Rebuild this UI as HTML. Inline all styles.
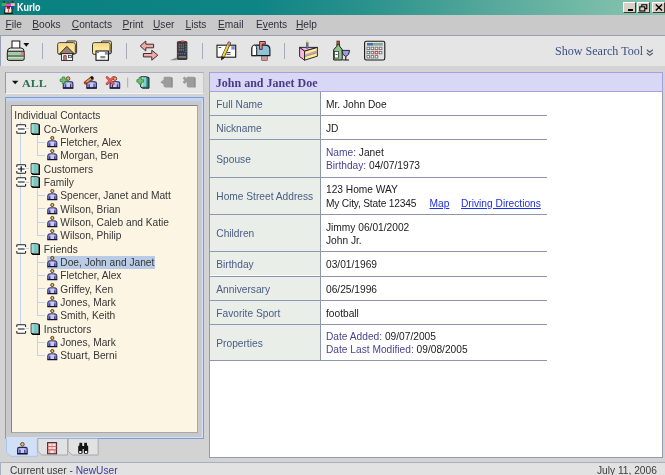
<!DOCTYPE html>
<html><head><meta charset="utf-8"><title>Kurlo</title>
<style>
html,body{margin:0;padding:0;}
body{width:665px;height:475px;overflow:hidden;background:#d3d3d3;font-family:"Liberation Sans",sans-serif;font-size:10.2px;color:#222;position:relative;}
.abs{position:absolute;}
svg{overflow:visible;}
#title{left:0;top:0;width:665px;height:15px;background:linear-gradient(90deg,#0a8181 0%,#0e8484 38%,#2a928c 55%,#58aa9c 75%,#7cbeaa 92%,#86c4b0 100%);}
#title .t{left:17.3px;top:0.8px;color:#fff;font-weight:bold;font-size:10px;line-height:13px;transform:scaleX(0.9);transform-origin:0 0;white-space:nowrap;}
.wb{position:absolute;top:2px;height:10.5px;background:#d8d0c2;border-top:1px solid #fff;border-left:1px solid #fff;border-right:1px solid #40382c;border-bottom:1px solid #40382c;box-sizing:border-box;}
#menu{left:0;top:15px;width:665px;height:20px;background:#c9c9c9;}
#menu span{position:absolute;top:3.2px;font-size:10.2px;line-height:13px;color:#30303c;}
#menu u{text-decoration:underline;text-underline-offset:1px;}
#tb{left:0;top:34.7px;width:665px;height:31.8px;background:#e5e5e5;border-top:1px solid #98a0b4;border-left:1px solid #98a0b4;box-sizing:border-box;}
.sep{position:absolute;top:43px;width:1px;height:15.5px;background:#a4acbc;}
#ltb{left:5px;top:71.5px;width:199px;height:22px;background:#e5e5e5;border:1px solid #c4c8d0;border-left-color:#8c9cb8;border-top-color:#a8b0c4;border-bottom-color:#f4f4f4;box-sizing:border-box;}
#tree-o{left:5px;top:97px;width:199px;height:342.3px;background:#c9c9c9;border:1px solid #7c9cd8;box-sizing:border-box;box-shadow:inset 0 3px 0 #c2d4f8, inset -1.2px -1px 0 #d0e0fc;}
#tree{left:11px;top:105px;width:186.6px;height:327.6px;background:#fdf5e3;border:1px solid #a4a8b0;border-top-color:#7c8498;border-left-color:#7c8498;box-sizing:border-box;}
.row{position:absolute;height:13.33px;line-height:13.33px;white-space:nowrap;font-size:10.2px;color:#363636;}
#rp{left:209px;top:71.5px;width:454px;height:386px;background:#fff;border:1px solid #909cb4;box-sizing:border-box;}
#rph{left:209px;top:71.5px;width:454px;height:20.5px;background:#d8d8f6;border:1px solid #a8a0d8;box-sizing:border-box;}
#rph span{position:absolute;left:5.8px;top:3px;font-family:"Liberation Serif",serif;font-weight:bold;font-size:12px;line-height:14px;color:#483c88;white-space:nowrap;}
.lab{color:#4a5c84;white-space:nowrap;line-height:13px;font-size:10.2px;}
.val{color:#202020;white-space:nowrap;line-height:13px;font-size:10.2px;}
.k{color:#4a4690;}
a{color:#2030e0;text-decoration:underline;}
#status{left:0;top:462px;width:665px;height:13px;background:#e2e2e2;border-top:1px solid #a8b0c0;border-left:1px solid #a8b0c0;box-sizing:border-box;font-size:10.2px;line-height:13px;color:#3a3a3a;}
#wrap{position:absolute;left:0;top:0;width:665px;height:475px;will-change:transform;}
</style></head><body><div id="wrap">
<div id="title" class="abs"><span class="abs t">Kurlo</span>
<div class="wb" style="left:623px;width:13px"><div class="abs" style="left:3.5px;top:6px;width:5px;height:1.6px;background:#000"></div></div>
<div class="wb" style="left:636.5px;width:13px"><svg class="abs" style="left:1.5px;top:0.5px" width="9" height="8" viewBox="0 0 9 8"><path d="M2.8 2.4 V0.8 H7.8 V4.6 H6" fill="none" stroke="#000" stroke-width="1.1"/><rect x="0.8" y="2.8" width="5" height="4.2" fill="none" stroke="#000" stroke-width="1.1"/></svg></div>
<div class="wb" style="left:652px;width:13px"><svg class="abs" style="left:2.2px;top:1px" width="8" height="7" viewBox="0 0 8 7"><path d="M0.8 0.6 L7 6.4 M7 0.6 L0.8 6.4" stroke="#000" stroke-width="1.4"/></svg></div>
<svg class="abs" style="left:0;top:0" width="18" height="15" viewBox="0 0 18 15">
<rect x="4.7" y="6.6" width="7.3" height="6.6" fill="#fff6d4" stroke="#1c1008" stroke-width="1"/>
<rect x="4.2" y="12.8" width="8.3" height="1" fill="#180c04"/>
<circle cx="4" cy="1.9" r="1.1" fill="#4a3420"/><rect x="1.7" y="3" width="4.4" height="3.4" fill="#44b432"/><rect x="2.6" y="6.2" width="3" height="3" fill="#2c5cc0"/>
<circle cx="12.6" cy="1.9" r="1.1" fill="#4a3420"/><rect x="10.8" y="3.2" width="4" height="2.8" fill="#f4b8b8"/><rect x="11" y="6" width="3" height="3.2" fill="#204c9c"/>
<circle cx="8.3" cy="2.6" r="1.1" fill="#6a4428"/><rect x="6" y="3.8" width="4.8" height="2.6" fill="#e444e0"/><rect x="6.8" y="6.2" width="3.2" height="2.6" fill="#8c1030"/>
<rect x="7.9" y="8.6" width="1" height="3.4" fill="#f03468"/>
</svg>
</div>
<div id="menu" class="abs">
<span style="left:5.4px"><u>F</u>ile</span>
<span style="left:32.3px"><u>B</u>ooks</span>
<span style="left:71.8px"><u>C</u>ontacts</span>
<span style="left:122.5px"><u>P</u>rint</span>
<span style="left:153px"><u>U</u>ser</span>
<span style="left:185.5px"><u>L</u>ists</span>
<span style="left:218px"><u>E</u>mail</span>
<span style="left:256px">E<u>v</u>ents</span>
<span style="left:296px"><u>H</u>elp</span>
</div>
<div id="tb" class="abs"></div>
<div class="sep" style="left:42px"></div>
<div class="sep" style="left:126px"></div>
<div class="sep" style="left:202px"></div>
<div class="sep" style="left:284px"></div>
<svg class="abs" style="left:0;top:0.4px;pointer-events:none" width="665" height="100" viewBox="0 0 665 100">
<!-- printer -->
<rect x="12" y="41" width="7.8" height="8" fill="#fff" stroke="#181818" stroke-width="1"/>
<path d="M7.3 52 Q7.3 48 10.5 48 H21 Q24.2 48 24.2 52 Z" fill="#ececec" stroke="#181818" stroke-width="1"/>
<rect x="7.3" y="51.2" width="16.9" height="9.2" rx="1.6" fill="#a4cca4" stroke="#181818" stroke-width="1"/>
<rect x="8" y="55.6" width="15.6" height="1.1" fill="#181818"/>
<rect x="8" y="56.7" width="15.6" height="0.8" fill="#f0f0f0"/>
<rect x="20.9" y="52" width="2.3" height="3.2" fill="#e47c7c"/>
<path d="M23.4 43.1 H29.2 L26.3 46.8 Z" fill="#101010"/>
<g transform="translate(0,0)">
<path d="M66.6 50 V42.3 Q66.6 41 67.9 41 H75.2 Q76.6 41 76.6 42.4 V52.6 Q76.6 53.6 75.6 53.6 H74" fill="#fdeaa8" stroke="#202020" stroke-width="0.9"/>
<rect x="57.7" y="42.7" width="17.6" height="11.7" rx="1.8" fill="#fce49a" stroke="#202020" stroke-width="0.9"/>
<rect x="58.6" y="43.6" width="15.8" height="3" fill="#fbdc88"/>
</g>
<path d="M66.8 46.4 L74.2 53.7 H59.6 Z" fill="#9c7e70" stroke="#1c1c1c" stroke-width="0.9"/>
<rect x="61.6" y="53.7" width="11" height="6.7" fill="#fff" stroke="#1c1c1c" stroke-width="0.9"/>
<rect x="63.8" y="55.7" width="2.4" height="4.6" fill="#d48484" stroke="#402020" stroke-width="0.7"/>
<rect x="68.6" y="55.5" width="3" height="2.2" fill="#e4e4ee" stroke="#303030" stroke-width="0.7"/>
<g transform="translate(34.8,0)">
<path d="M66.6 50 V42.3 Q66.6 41 67.9 41 H75.2 Q76.6 41 76.6 42.4 V52.6 Q76.6 53.6 75.6 53.6 H74" fill="#fdeaa8" stroke="#202020" stroke-width="0.9"/>
<rect x="57.7" y="42.7" width="17.6" height="11.7" rx="1.8" fill="#fce49a" stroke="#202020" stroke-width="0.9"/>
<rect x="58.6" y="43.6" width="15.8" height="3" fill="#fbdc88"/>
</g>
<rect x="96" y="51" width="12.4" height="9.3" fill="#fff" stroke="#181818" stroke-width="1.1"/>
<rect x="104.9" y="51.7" width="2.9" height="3" fill="#8484c4"/>
<rect x="100.3" y="56" width="5" height="2.3" fill="#8c8c8c"/>
<rect x="97" y="52.2" width="2" height="0.9" fill="#606060"/>
<!-- arrows -->
<path d="M140.2 46 L145.8 41 V44.2 H153.6 V47.8 H145.8 V51 Z" fill="#f4a8a8" stroke="#3a3030" stroke-width="1" stroke-linejoin="round"/>
<path d="M157.8 55.2 L151.8 50.2 V53.5 H143.4 V56.9 H151.8 V60.2 Z" fill="#f4a8a8" stroke="#3a3030" stroke-width="1" stroke-linejoin="round"/>
<!-- remote -->
<path d="M169.8 60.2 L176.8 57.4 V60.2 Z" fill="#8c8c8c"/>
<rect x="176.9" y="40.9" width="10.5" height="19.2" rx="1.6" fill="#3a3a3c"/>
<rect x="181" y="40.5" width="3.4" height="1.6" fill="#f03434"/>
<rect x="177.6" y="41.2" width="1.2" height="1" fill="#e04040"/>
<g fill="#6c6c70"><rect x="178.6" y="43.8" width="1.4" height="1.8"/><rect x="180.6" y="43.8" width="1.4" height="1.8"/><rect x="182.6" y="43.8" width="1.4" height="1.8"/>
<rect x="178.6" y="46.4" width="1.4" height="1.8"/><rect x="180.6" y="46.4" width="1.4" height="1.8"/><rect x="182.6" y="46.4" width="1.4" height="1.8"/>
<rect x="178.6" y="49" width="1.4" height="1.8"/><rect x="180.6" y="49" width="1.4" height="1.8"/><rect x="182.6" y="49" width="1.4" height="1.8"/></g>
<g fill="#3c7ce0"><rect x="185.2" y="43.6" width="1.2" height="1.2"/><rect x="185.2" y="46" width="1.2" height="1.2"/><rect x="185.2" y="48.4" width="1.2" height="1.2"/><rect x="185.2" y="50.8" width="1.2" height="1.2"/>
<rect x="179.6" y="53" width="1.2" height="1.2"/><rect x="181.8" y="53" width="1.2" height="1.2"/><rect x="184" y="53" width="1.2" height="1.2"/></g>
<rect x="177.6" y="53" width="1.2" height="1.2" fill="#e04040"/>
<rect x="178.6" y="56" width="7.4" height="2" fill="#77777a"/>
<!-- envelope + pencil -->
<rect x="217" y="45.2" width="18.7" height="12" fill="#fff" stroke="#181818" stroke-width="1.1"/>
<rect x="231.3" y="46.2" width="3.5" height="3.4" fill="#8888c8"/>
<rect x="218.6" y="47" width="2.6" height="1" fill="#505050"/>
<rect x="226.5" y="52" width="4" height="1" fill="#404040"/><rect x="226.5" y="53.8" width="4" height="1" fill="#404040"/>
<path d="M229.2 43.2 L222.6 57.6" stroke="#282018" stroke-width="3.3" stroke-linecap="round"/>
<path d="M228.8 43.8 L223 56.8" stroke="#ecd040" stroke-width="2.2"/>
<path d="M229.2 43.1 L228.6 44.4" stroke="#f08090" stroke-width="2.2" stroke-linecap="round"/>
<path d="M228.5 44.6 L228.1 45.4" stroke="#50a050" stroke-width="2.4"/>
<path d="M223 56.8 L221.6 59.6" stroke="#282018" stroke-width="1.2" stroke-linecap="round"/>
<!-- mailbox -->
<rect x="261.7" y="55.4" width="5.6" height="5" fill="#c89c9c" stroke="#5a4040" stroke-width="0.6"/>
<path d="M251.9 55.6 V49.6 Q251.9 45.1 256.4 45.1 H265.4 Q269.9 45.1 269.9 49.6 V55.6 Z" fill="#92c2da" stroke="#141414" stroke-width="1.1"/>
<path d="M251.9 55.6 V49.4 Q251.9 45.1 254.3 45.1 Q256.7 45.1 256.7 49.4 V55.6 Z" fill="#fff" stroke="#141414" stroke-width="1"/>
<path d="M259.6 49.4 V41.5 H265.3 V44.1 H262.2 V49.4 Z" fill="#f08a8a" stroke="#3a2020" stroke-width="0.9"/>
<!-- cake -->
<path d="M299.6 47.4 H317.4 L304.6 51.2 Z" fill="#f4b4dc" stroke="#181818" stroke-width="0.9" stroke-linejoin="round"/>
<path d="M299.6 47.4 L304.6 51.2 V60.2 L299.6 56.6 Z" fill="#f8b8e0" stroke="#181818" stroke-width="0.9" stroke-linejoin="round"/>
<path d="M304.6 51.2 L317.4 47.4 V56.2 L304.6 60.2 Z" fill="#f4f0a0" stroke="#181818" stroke-width="0.9" stroke-linejoin="round"/>
<path d="M305 54.4 L317 50.6 V53.2 L305 57 Z" fill="#b88890"/>
<path d="M305 55.4 L317 51.6" stroke="#f0c8d0" stroke-width="0.6"/>
<rect x="306.2" y="42.6" width="1.9" height="5.6" fill="#6c78a8" stroke="#303848" stroke-width="0.4"/>
<ellipse cx="307.1" cy="41.4" rx="0.9" ry="1.3" fill="#f0d840"/>
<!-- bottle + glass -->
<path d="M336.9 44.6 V46.2 L333.7 49.6 V60 H342.2 V49.6 L339.6 46.2 V44.6 Z" fill="#8cc490" stroke="#181818" stroke-width="1" stroke-linejoin="round"/>
<rect x="336.9" y="41" width="2.7" height="3.6" fill="#a85838" stroke="#301810" stroke-width="0.6"/>
<rect x="334.6" y="51.6" width="3.8" height="6.4" fill="#fff" stroke="#282828" stroke-width="0.7"/>
<rect x="335.4" y="54" width="2.2" height="0.8" fill="#404040"/>
<path d="M342 50.4 H349.6 Q349.4 55.2 345.8 56.6 Q342.2 55.2 342 50.4 Z" fill="#9c9ce4" stroke="#181818" stroke-width="0.9" stroke-linejoin="round"/>
<path d="M345.8 56.6 V59.8 M342.8 60 H349" stroke="#181818" stroke-width="1.1"/>
<!-- calendar -->
<rect x="364.6" y="41.2" width="20.2" height="18.8" rx="1.8" fill="#e2e2e2" stroke="#181818" stroke-width="1.1"/>
<rect x="367" y="43" width="6.2" height="2.6" fill="#4872a4"/><rect x="373.2" y="43" width="9.6" height="2.6" fill="#84a894"/>
<g fill="#fff" stroke="#707070" stroke-width="0.9">
<rect x="367" y="47.2" width="2.6" height="2.4"/><rect x="371.1" y="47.2" width="2.6" height="2.4"/><rect x="375.2" y="47.2" width="2.6" height="2.4"/><rect x="379.3" y="47.2" width="2.6" height="2.4"/>
<rect x="367" y="51.4" width="2.6" height="2.4"/><rect x="371.1" y="51.4" width="2.6" height="2.4"/><rect x="379.3" y="51.4" width="2.6" height="2.4"/>
<rect x="367" y="55.6" width="2.6" height="2.4"/><rect x="371.1" y="55.6" width="2.6" height="2.4"/><rect x="375.2" y="55.6" width="2.6" height="2.4"/></g>
<rect x="375.2" y="51.4" width="2.6" height="2.4" fill="#fff" stroke="#e03030" stroke-width="1"/>
</svg>
<div class="abs" style="left:554.5px;top:44.3px;font-family:'Liberation Serif',serif;font-size:12.6px;line-height:15px;color:#3c5080;white-space:nowrap;transform:scaleX(0.958);transform-origin:0 0" id="sst">Show Search Tool</div>
<svg class="abs" style="left:646px;top:49px" width="8" height="8" viewBox="0 0 8 8"><path d="M0.8 0.8 L3.8 3.2 L6.8 0.8 M0.8 4 L3.8 6.4 L6.8 4" fill="none" stroke="#50586c" stroke-width="1.1"/></svg>
<div id="ltb" class="abs"></div>
<svg class="abs" style="left:0;top:0.4px;pointer-events:none" width="210" height="100" viewBox="0 0 210 100">
<path d="M12 80.8 H18.4 L15.2 84.3 Z" fill="#101010"/>
<circle cx="68.1" cy="78.60000000000001" r="1.8" fill="#f4b45c" stroke="#3a2a1a" stroke-width="0.8"/>
<path d="M63.3 87.9 V83.3 Q63.3 81.7 64.89999999999999 81.7 H71.3 Q72.89999999999999 81.7 72.89999999999999 83.3 V87.9 Z" fill="#9c9cf0" stroke="#26264c" stroke-width="1.1"/>
<rect x="66.2" y="82.5" width="3.8" height="4.6" fill="#c8c8fa"/>
<path d="M65.7 87.9 V84.3 M70.5 87.9 V84.3" stroke="#26264c" stroke-width="0.9"/>
<path d="M63.0 88.10000000000001 H73.2" stroke="#141420" stroke-width="1.2"/><path d="M62.25 77.0 H64.75 V79.05 H66.8 V81.55 H64.75 V83.6 H62.25 V81.55 H60.2 V79.05 H62.25 Z" fill="#74c274" stroke="#34803c" stroke-width="0.75" stroke-linejoin="round"/><circle cx="91.6" cy="78.60000000000001" r="1.8" fill="#f4b45c" stroke="#3a2a1a" stroke-width="0.8"/>
<path d="M86.8 87.9 V83.3 Q86.8 81.7 88.39999999999999 81.7 H94.8 Q96.39999999999999 81.7 96.39999999999999 83.3 V87.9 Z" fill="#9c9cf0" stroke="#26264c" stroke-width="1.1"/>
<rect x="89.7" y="82.5" width="3.8" height="4.6" fill="#c8c8fa"/>
<path d="M89.2 87.9 V84.3 M94.0 87.9 V84.3" stroke="#26264c" stroke-width="0.9"/>
<path d="M86.5 88.10000000000001 H96.7" stroke="#141420" stroke-width="1.2"/>
<path d="M85.4 82.8 L91.8 78" stroke="#4a2a10" stroke-width="3.2" stroke-linecap="round"/>
<path d="M85.8 82.5 L91.2 78.4" stroke="#eca050" stroke-width="1.9"/>
<path d="M85 83.1 L85.8 82.5" stroke="#e03030" stroke-width="2" stroke-linecap="round"/>
<circle cx="92" cy="77.8" r="1.3" fill="#181010"/>
<circle cx="114.89999999999999" cy="78.60000000000001" r="1.8" fill="#f4b45c" stroke="#3a2a1a" stroke-width="0.8"/>
<path d="M110.1 87.9 V83.3 Q110.1 81.7 111.69999999999999 81.7 H118.1 Q119.69999999999999 81.7 119.69999999999999 83.3 V87.9 Z" fill="#9c9cf0" stroke="#26264c" stroke-width="1.1"/>
<rect x="113.0" y="82.5" width="3.8" height="4.6" fill="#c8c8fa"/>
<path d="M112.5 87.9 V84.3 M117.3 87.9 V84.3" stroke="#26264c" stroke-width="0.9"/>
<path d="M109.8 88.10000000000001 H120.0" stroke="#141420" stroke-width="1.2"/>
<path d="M107 77.4 L113.4 83.8 M113.4 77.4 L107 83.8" stroke="#b83838" stroke-width="2.6" stroke-linecap="round"/>
<path d="M107 77.4 L113.4 83.8 M113.4 77.4 L107 83.8" stroke="#ec6060" stroke-width="1.4" stroke-linecap="round"/>
<rect x="127.2" y="77.6" width="1" height="9.8" fill="#a4acbc"/>
<path d="M140.7 76.8 H146.7 L149.0 77.7 V88.2 H142.5 L140.7 87.0 Z" fill="#2c7c78" stroke="#101818" stroke-width="0.9"/>
<rect x="141.2" y="77.3" width="5.2" height="9.4" fill="#80d0c8"/><rect x="141.2" y="77.3" width="2" height="9.4" fill="#a8e4dc"/><path d="M138.95 77.60000000000001 H141.45 V79.65 H143.5 V82.15 H141.45 V84.2 H138.95 V82.15 H136.89999999999998 V79.65 H138.95 Z" fill="#74c274" stroke="#34803c" stroke-width="0.75" stroke-linejoin="round"/>
<path d="M164.4 76.8 H170.6 L172.7 77.8 V87.6 H165.4 L163.6 86.6 V84.6 L160.3 82.2 L163.6 79.8 V77.6 Z" fill="#9c9c9c"/>
<path d="M170.4 77.2 L172.4 78 V87.3 H171.2 V78.4 Z" fill="#8a8a8a"/>
<path d="M187.6 76.8 H193.6 L195.6 77.8 V87.6 H188.4 L186.8 86.6 V77.6 Z" fill="#9c9c9c"/>
<path d="M183.6 77.4 L188.8 83 M188.8 77.4 L183.6 83" stroke="#9c9c9c" stroke-width="2.6"/>
<path d="M193.4 77.2 L195.3 78 V87.3 H194.2 V78.4 Z" fill="#8a8a8a"/>
</svg>
<div class="abs" style="left:21.6px;top:76.8px;font-family:'Liberation Serif',serif;font-size:11px;line-height:13px;color:#2c7050;font-weight:bold;white-space:nowrap;transform:scaleX(1.09);transform-origin:0 0" id="all">ALL</div>
<div id="tree-o" class="abs"></div>
<div id="tree" class="abs"></div>
<div class="abs" style="left:20px;top:121.63px;width:1px;height:207.26px;background:#c0d2ee"></div>
<div class="abs" style="left:20px;top:128.40px;width:9px;height:1px;background:#c0d2ee"></div>
<div class="abs" style="left:37px;top:141.73px;width:8px;height:1px;background:#c0d2ee"></div>
<div class="abs" style="left:37px;top:155.07px;width:8px;height:1px;background:#c0d2ee"></div>
<div class="abs" style="left:37px;top:134.97px;width:1px;height:20.60px;background:#c0d2ee"></div>
<div class="abs" style="left:20px;top:168.40px;width:9px;height:1px;background:#c0d2ee"></div>
<div class="abs" style="left:20px;top:181.73px;width:9px;height:1px;background:#c0d2ee"></div>
<div class="abs" style="left:37px;top:195.06px;width:8px;height:1px;background:#c0d2ee"></div>
<div class="abs" style="left:37px;top:208.40px;width:8px;height:1px;background:#c0d2ee"></div>
<div class="abs" style="left:37px;top:221.73px;width:8px;height:1px;background:#c0d2ee"></div>
<div class="abs" style="left:37px;top:235.06px;width:8px;height:1px;background:#c0d2ee"></div>
<div class="abs" style="left:37px;top:188.30px;width:1px;height:47.27px;background:#c0d2ee"></div>
<div class="abs" style="left:20px;top:248.40px;width:9px;height:1px;background:#c0d2ee"></div>
<div class="abs" style="left:37px;top:261.73px;width:8px;height:1px;background:#c0d2ee"></div>
<div class="abs" style="left:37px;top:275.06px;width:8px;height:1px;background:#c0d2ee"></div>
<div class="abs" style="left:37px;top:288.40px;width:8px;height:1px;background:#c0d2ee"></div>
<div class="abs" style="left:37px;top:301.73px;width:8px;height:1px;background:#c0d2ee"></div>
<div class="abs" style="left:37px;top:315.06px;width:8px;height:1px;background:#c0d2ee"></div>
<div class="abs" style="left:37px;top:254.96px;width:1px;height:60.60px;background:#c0d2ee"></div>
<div class="abs" style="left:20px;top:328.39px;width:9px;height:1px;background:#c0d2ee"></div>
<div class="abs" style="left:37px;top:341.73px;width:8px;height:1px;background:#c0d2ee"></div>
<div class="abs" style="left:37px;top:355.06px;width:8px;height:1px;background:#c0d2ee"></div>
<div class="abs" style="left:37px;top:334.96px;width:1px;height:20.60px;background:#c0d2ee"></div>
<div class="row" style="left:14.3px;top:109.30px">Individual Contacts</div>
<svg class="abs" style="left:16px;top:123.83px" width="11" height="10" viewBox="0 0 11 10"><rect x="0.9" y="0.9" width="8.6" height="8.2" rx="0.6" fill="#fff"/><path d="M0.8 3 V1.5 Q0.8 0.8 1.5 0.8 H8.9 Q9.6 0.8 9.6 1.5 V3 M0.8 7 V8.5 Q0.8 9.2 1.5 9.2 H8.9 Q9.6 9.2 9.6 8.5 V7" fill="none" stroke="#222" stroke-width="1.05"/><path d="M1.8 5 H8.6" stroke="#222" stroke-width="1.1"/></svg>
<svg class="abs" style="left:30.4px;top:122.83px" width="10" height="12" viewBox="0 0 10 12"><path d="M1.2 0.7 H6.8 L9.2 1.5 V11.1 H3 L1.2 10.1 Z" fill="#a4bcb8" stroke="#141c1c" stroke-width="1"/><path d="M1.2 10.3 L3 11.3 H9.4 V1.6" fill="none" stroke="#080808" stroke-width="1.2"/><rect x="1.7" y="1.2" width="5.2" height="8.8" fill="#78c8c0"/><rect x="1.7" y="1.2" width="2" height="8.8" fill="#a0dcd4"/></svg>
<div class="row" style="left:43.8px;top:122.63px">Co-Workers</div>
<svg class="abs" style="left:46.8px;top:136.07px" width="11" height="12" viewBox="0 0 11 12"><path d="M0.8 10.5 V6.7 Q0.8 4.9 2.6 4.9 H8 Q9.8 4.9 9.8 6.7 V10.5 Z" fill="#9090ec" stroke="#1c1c40" stroke-width="1"/><rect x="3.3" y="5.5" width="4" height="4.5" fill="#c8c8fc"/><path d="M2.8 10.5 V7.4 M7.8 10.5 V7.4" stroke="#1c1c40" stroke-width="0.9"/><path d="M0.3 10.7 H10.3" stroke="#101020" stroke-width="1.1"/><circle cx="5.3" cy="2" r="1.6" fill="#f6b65c" stroke="#3a2a1a" stroke-width="0.85"/></svg>
<div class="row" style="left:60.3px;top:135.97px">Fletcher, Alex</div>
<svg class="abs" style="left:46.8px;top:149.4px" width="11" height="12" viewBox="0 0 11 12"><path d="M0.8 10.5 V6.7 Q0.8 4.9 2.6 4.9 H8 Q9.8 4.9 9.8 6.7 V10.5 Z" fill="#9090ec" stroke="#1c1c40" stroke-width="1"/><rect x="3.3" y="5.5" width="4" height="4.5" fill="#c8c8fc"/><path d="M2.8 10.5 V7.4 M7.8 10.5 V7.4" stroke="#1c1c40" stroke-width="0.9"/><path d="M0.3 10.7 H10.3" stroke="#101020" stroke-width="1.1"/><circle cx="5.3" cy="2" r="1.6" fill="#f6b65c" stroke="#3a2a1a" stroke-width="0.85"/></svg>
<div class="row" style="left:60.3px;top:149.30px">Morgan, Ben</div>
<svg class="abs" style="left:16px;top:163.83px" width="11" height="10" viewBox="0 0 11 10"><rect x="0.9" y="0.9" width="8.6" height="8.2" rx="0.6" fill="#fff"/><path d="M0.8 3 V1.5 Q0.8 0.8 1.5 0.8 H8.9 Q9.6 0.8 9.6 1.5 V3 M0.8 7 V8.5 Q0.8 9.2 1.5 9.2 H8.9 Q9.6 9.2 9.6 8.5 V7" fill="none" stroke="#222" stroke-width="1.05"/><path d="M1.8 5 H8.6" stroke="#222" stroke-width="1.1"/><path d="M5.2 2.2 V7.8" stroke="#1a1a1a" stroke-width="1.3"/></svg>
<svg class="abs" style="left:30.4px;top:162.83px" width="10" height="12" viewBox="0 0 10 12"><path d="M1.2 0.7 H6.8 L9.2 1.5 V11.1 H3 L1.2 10.1 Z" fill="#a4bcb8" stroke="#141c1c" stroke-width="1"/><path d="M1.2 10.3 L3 11.3 H9.4 V1.6" fill="none" stroke="#080808" stroke-width="1.2"/><rect x="1.7" y="1.2" width="5.2" height="8.8" fill="#78c8c0"/><rect x="1.7" y="1.2" width="2" height="8.8" fill="#a0dcd4"/></svg>
<div class="row" style="left:43.8px;top:162.63px">Customers</div>
<svg class="abs" style="left:16px;top:177.16px" width="11" height="10" viewBox="0 0 11 10"><rect x="0.9" y="0.9" width="8.6" height="8.2" rx="0.6" fill="#fff"/><path d="M0.8 3 V1.5 Q0.8 0.8 1.5 0.8 H8.9 Q9.6 0.8 9.6 1.5 V3 M0.8 7 V8.5 Q0.8 9.2 1.5 9.2 H8.9 Q9.6 9.2 9.6 8.5 V7" fill="none" stroke="#222" stroke-width="1.05"/><path d="M1.8 5 H8.6" stroke="#222" stroke-width="1.1"/></svg>
<svg class="abs" style="left:30.4px;top:176.16px" width="10" height="12" viewBox="0 0 10 12"><path d="M1.2 0.7 H6.8 L9.2 1.5 V11.1 H3 L1.2 10.1 Z" fill="#a4bcb8" stroke="#141c1c" stroke-width="1"/><path d="M1.2 10.3 L3 11.3 H9.4 V1.6" fill="none" stroke="#080808" stroke-width="1.2"/><rect x="1.7" y="1.2" width="5.2" height="8.8" fill="#78c8c0"/><rect x="1.7" y="1.2" width="2" height="8.8" fill="#a0dcd4"/></svg>
<div class="row" style="left:43.8px;top:175.97px">Family</div>
<svg class="abs" style="left:46.8px;top:189.4px" width="11" height="12" viewBox="0 0 11 12"><path d="M0.8 10.5 V6.7 Q0.8 4.9 2.6 4.9 H8 Q9.8 4.9 9.8 6.7 V10.5 Z" fill="#9090ec" stroke="#1c1c40" stroke-width="1"/><rect x="3.3" y="5.5" width="4" height="4.5" fill="#c8c8fc"/><path d="M2.8 10.5 V7.4 M7.8 10.5 V7.4" stroke="#1c1c40" stroke-width="0.9"/><path d="M0.3 10.7 H10.3" stroke="#101020" stroke-width="1.1"/><circle cx="5.3" cy="2" r="1.6" fill="#f6b65c" stroke="#3a2a1a" stroke-width="0.85"/></svg>
<div class="row" style="left:60.3px;top:189.30px">Spencer, Janet and Matt</div>
<svg class="abs" style="left:46.8px;top:202.73px" width="11" height="12" viewBox="0 0 11 12"><path d="M0.8 10.5 V6.7 Q0.8 4.9 2.6 4.9 H8 Q9.8 4.9 9.8 6.7 V10.5 Z" fill="#9090ec" stroke="#1c1c40" stroke-width="1"/><rect x="3.3" y="5.5" width="4" height="4.5" fill="#c8c8fc"/><path d="M2.8 10.5 V7.4 M7.8 10.5 V7.4" stroke="#1c1c40" stroke-width="0.9"/><path d="M0.3 10.7 H10.3" stroke="#101020" stroke-width="1.1"/><circle cx="5.3" cy="2" r="1.6" fill="#f6b65c" stroke="#3a2a1a" stroke-width="0.85"/></svg>
<div class="row" style="left:60.3px;top:202.63px">Wilson, Brian</div>
<svg class="abs" style="left:46.8px;top:216.06px" width="11" height="12" viewBox="0 0 11 12"><path d="M0.8 10.5 V6.7 Q0.8 4.9 2.6 4.9 H8 Q9.8 4.9 9.8 6.7 V10.5 Z" fill="#9090ec" stroke="#1c1c40" stroke-width="1"/><rect x="3.3" y="5.5" width="4" height="4.5" fill="#c8c8fc"/><path d="M2.8 10.5 V7.4 M7.8 10.5 V7.4" stroke="#1c1c40" stroke-width="0.9"/><path d="M0.3 10.7 H10.3" stroke="#101020" stroke-width="1.1"/><circle cx="5.3" cy="2" r="1.6" fill="#f6b65c" stroke="#3a2a1a" stroke-width="0.85"/></svg>
<div class="row" style="left:60.3px;top:215.96px">Wilson, Caleb and Katie</div>
<svg class="abs" style="left:46.8px;top:229.4px" width="11" height="12" viewBox="0 0 11 12"><path d="M0.8 10.5 V6.7 Q0.8 4.9 2.6 4.9 H8 Q9.8 4.9 9.8 6.7 V10.5 Z" fill="#9090ec" stroke="#1c1c40" stroke-width="1"/><rect x="3.3" y="5.5" width="4" height="4.5" fill="#c8c8fc"/><path d="M2.8 10.5 V7.4 M7.8 10.5 V7.4" stroke="#1c1c40" stroke-width="0.9"/><path d="M0.3 10.7 H10.3" stroke="#101020" stroke-width="1.1"/><circle cx="5.3" cy="2" r="1.6" fill="#f6b65c" stroke="#3a2a1a" stroke-width="0.85"/></svg>
<div class="row" style="left:60.3px;top:229.30px">Wilson, Philip</div>
<svg class="abs" style="left:16px;top:243.83px" width="11" height="10" viewBox="0 0 11 10"><rect x="0.9" y="0.9" width="8.6" height="8.2" rx="0.6" fill="#fff"/><path d="M0.8 3 V1.5 Q0.8 0.8 1.5 0.8 H8.9 Q9.6 0.8 9.6 1.5 V3 M0.8 7 V8.5 Q0.8 9.2 1.5 9.2 H8.9 Q9.6 9.2 9.6 8.5 V7" fill="none" stroke="#222" stroke-width="1.05"/><path d="M1.8 5 H8.6" stroke="#222" stroke-width="1.1"/></svg>
<svg class="abs" style="left:30.4px;top:242.83px" width="10" height="12" viewBox="0 0 10 12"><path d="M1.2 0.7 H6.8 L9.2 1.5 V11.1 H3 L1.2 10.1 Z" fill="#a4bcb8" stroke="#141c1c" stroke-width="1"/><path d="M1.2 10.3 L3 11.3 H9.4 V1.6" fill="none" stroke="#080808" stroke-width="1.2"/><rect x="1.7" y="1.2" width="5.2" height="8.8" fill="#78c8c0"/><rect x="1.7" y="1.2" width="2" height="8.8" fill="#a0dcd4"/></svg>
<div class="row" style="left:43.8px;top:242.63px">Friends</div>
<div class="abs" style="left:47.4px;top:256.16px;width:107.6px;height:12.4px;background:#b8cce8"></div>
<svg class="abs" style="left:46.8px;top:256.06px" width="11" height="12" viewBox="0 0 11 12"><path d="M0.8 10.5 V6.7 Q0.8 4.9 2.6 4.9 H8 Q9.8 4.9 9.8 6.7 V10.5 Z" fill="#9090ec" stroke="#1c1c40" stroke-width="1"/><rect x="3.3" y="5.5" width="4" height="4.5" fill="#c8c8fc"/><path d="M2.8 10.5 V7.4 M7.8 10.5 V7.4" stroke="#1c1c40" stroke-width="0.9"/><path d="M0.3 10.7 H10.3" stroke="#101020" stroke-width="1.1"/><circle cx="5.3" cy="2" r="1.6" fill="#f6b65c" stroke="#3a2a1a" stroke-width="0.85"/></svg>
<div class="row" style="left:60.3px;top:255.96px">Doe, John and Janet</div>
<svg class="abs" style="left:46.8px;top:269.4px" width="11" height="12" viewBox="0 0 11 12"><path d="M0.8 10.5 V6.7 Q0.8 4.9 2.6 4.9 H8 Q9.8 4.9 9.8 6.7 V10.5 Z" fill="#9090ec" stroke="#1c1c40" stroke-width="1"/><rect x="3.3" y="5.5" width="4" height="4.5" fill="#c8c8fc"/><path d="M2.8 10.5 V7.4 M7.8 10.5 V7.4" stroke="#1c1c40" stroke-width="0.9"/><path d="M0.3 10.7 H10.3" stroke="#101020" stroke-width="1.1"/><circle cx="5.3" cy="2" r="1.6" fill="#f6b65c" stroke="#3a2a1a" stroke-width="0.85"/></svg>
<div class="row" style="left:60.3px;top:269.30px">Fletcher, Alex</div>
<svg class="abs" style="left:46.8px;top:282.73px" width="11" height="12" viewBox="0 0 11 12"><path d="M0.8 10.5 V6.7 Q0.8 4.9 2.6 4.9 H8 Q9.8 4.9 9.8 6.7 V10.5 Z" fill="#9090ec" stroke="#1c1c40" stroke-width="1"/><rect x="3.3" y="5.5" width="4" height="4.5" fill="#c8c8fc"/><path d="M2.8 10.5 V7.4 M7.8 10.5 V7.4" stroke="#1c1c40" stroke-width="0.9"/><path d="M0.3 10.7 H10.3" stroke="#101020" stroke-width="1.1"/><circle cx="5.3" cy="2" r="1.6" fill="#f6b65c" stroke="#3a2a1a" stroke-width="0.85"/></svg>
<div class="row" style="left:60.3px;top:282.63px">Griffey, Ken</div>
<svg class="abs" style="left:46.8px;top:296.06px" width="11" height="12" viewBox="0 0 11 12"><path d="M0.8 10.5 V6.7 Q0.8 4.9 2.6 4.9 H8 Q9.8 4.9 9.8 6.7 V10.5 Z" fill="#9090ec" stroke="#1c1c40" stroke-width="1"/><rect x="3.3" y="5.5" width="4" height="4.5" fill="#c8c8fc"/><path d="M2.8 10.5 V7.4 M7.8 10.5 V7.4" stroke="#1c1c40" stroke-width="0.9"/><path d="M0.3 10.7 H10.3" stroke="#101020" stroke-width="1.1"/><circle cx="5.3" cy="2" r="1.6" fill="#f6b65c" stroke="#3a2a1a" stroke-width="0.85"/></svg>
<div class="row" style="left:60.3px;top:295.96px">Jones, Mark</div>
<svg class="abs" style="left:46.8px;top:309.4px" width="11" height="12" viewBox="0 0 11 12"><path d="M0.8 10.5 V6.7 Q0.8 4.9 2.6 4.9 H8 Q9.8 4.9 9.8 6.7 V10.5 Z" fill="#9090ec" stroke="#1c1c40" stroke-width="1"/><rect x="3.3" y="5.5" width="4" height="4.5" fill="#c8c8fc"/><path d="M2.8 10.5 V7.4 M7.8 10.5 V7.4" stroke="#1c1c40" stroke-width="0.9"/><path d="M0.3 10.7 H10.3" stroke="#101020" stroke-width="1.1"/><circle cx="5.3" cy="2" r="1.6" fill="#f6b65c" stroke="#3a2a1a" stroke-width="0.85"/></svg>
<div class="row" style="left:60.3px;top:309.30px">Smith, Keith</div>
<svg class="abs" style="left:16px;top:323.83px" width="11" height="10" viewBox="0 0 11 10"><rect x="0.9" y="0.9" width="8.6" height="8.2" rx="0.6" fill="#fff"/><path d="M0.8 3 V1.5 Q0.8 0.8 1.5 0.8 H8.9 Q9.6 0.8 9.6 1.5 V3 M0.8 7 V8.5 Q0.8 9.2 1.5 9.2 H8.9 Q9.6 9.2 9.6 8.5 V7" fill="none" stroke="#222" stroke-width="1.05"/><path d="M1.8 5 H8.6" stroke="#222" stroke-width="1.1"/></svg>
<svg class="abs" style="left:30.4px;top:322.83px" width="10" height="12" viewBox="0 0 10 12"><path d="M1.2 0.7 H6.8 L9.2 1.5 V11.1 H3 L1.2 10.1 Z" fill="#a4bcb8" stroke="#141c1c" stroke-width="1"/><path d="M1.2 10.3 L3 11.3 H9.4 V1.6" fill="none" stroke="#080808" stroke-width="1.2"/><rect x="1.7" y="1.2" width="5.2" height="8.8" fill="#78c8c0"/><rect x="1.7" y="1.2" width="2" height="8.8" fill="#a0dcd4"/></svg>
<div class="row" style="left:43.8px;top:322.63px">Instructors</div>
<svg class="abs" style="left:46.8px;top:336.06px" width="11" height="12" viewBox="0 0 11 12"><path d="M0.8 10.5 V6.7 Q0.8 4.9 2.6 4.9 H8 Q9.8 4.9 9.8 6.7 V10.5 Z" fill="#9090ec" stroke="#1c1c40" stroke-width="1"/><rect x="3.3" y="5.5" width="4" height="4.5" fill="#c8c8fc"/><path d="M2.8 10.5 V7.4 M7.8 10.5 V7.4" stroke="#1c1c40" stroke-width="0.9"/><path d="M0.3 10.7 H10.3" stroke="#101020" stroke-width="1.1"/><circle cx="5.3" cy="2" r="1.6" fill="#f6b65c" stroke="#3a2a1a" stroke-width="0.85"/></svg>
<div class="row" style="left:60.3px;top:335.96px">Jones, Mark</div>
<svg class="abs" style="left:46.8px;top:349.39px" width="11" height="12" viewBox="0 0 11 12"><path d="M0.8 10.5 V6.7 Q0.8 4.9 2.6 4.9 H8 Q9.8 4.9 9.8 6.7 V10.5 Z" fill="#9090ec" stroke="#1c1c40" stroke-width="1"/><rect x="3.3" y="5.5" width="4" height="4.5" fill="#c8c8fc"/><path d="M2.8 10.5 V7.4 M7.8 10.5 V7.4" stroke="#1c1c40" stroke-width="0.9"/><path d="M0.3 10.7 H10.3" stroke="#101020" stroke-width="1.1"/><circle cx="5.3" cy="2" r="1.6" fill="#f6b65c" stroke="#3a2a1a" stroke-width="0.85"/></svg>
<div class="row" style="left:60.3px;top:349.29px">Stuart, Berni</div>
<svg class="abs" style="left:0;top:0;pointer-events:none" width="210" height="475" viewBox="0 0 210 475">
<path d="M6.5 438.5 H37.3 V456.3 H11 L6.5 452.3 Z" fill="#d2e0f6" stroke="#a8c4f0" stroke-width="1"/>
<path d="M6.5 438.5 H37.3" stroke="#d2e0f6" stroke-width="1.4"/>
<path d="M37.8 438.8 V451 L41.8 455 H67.6 V438.8" fill="#e2e2e2" stroke="#a8a8b0" stroke-width="1"/>
<path d="M68.1 438.8 V451 L72.1 455 H98.2 V438.8" fill="#e2e2e2" stroke="#a8a8b0" stroke-width="1"/>
<circle cx="22.400000000000002" cy="444.29999999999995" r="1.8" fill="#f4b45c" stroke="#3a2a1a" stroke-width="0.8"/>
<path d="M17.6 453.59999999999997 V449.0 Q17.6 447.4 19.200000000000003 447.4 H25.6 Q27.200000000000003 447.4 27.200000000000003 449.0 V453.59999999999997 Z" fill="#9c9cf0" stroke="#26264c" stroke-width="1.1"/>
<rect x="20.5" y="448.2" width="3.8" height="4.6" fill="#c8c8fa"/>
<path d="M20.0 453.59999999999997 V450.0 M24.8 453.59999999999997 V450.0" stroke="#26264c" stroke-width="0.9"/>
<path d="M17.3 453.79999999999995 H27.5" stroke="#141420" stroke-width="1.2"/>
<rect x="47.6" y="442.6" width="9" height="11.2" fill="#f0a0a0" stroke="#3a2828" stroke-width="1"/>
<g fill="#fbe4e4"><rect x="48.8" y="444" width="2.8" height="2"/><rect x="52.6" y="444" width="2.8" height="2"/><rect x="48.8" y="447" width="2.8" height="2"/><rect x="52.6" y="447" width="2.8" height="2"/><rect x="50.4" y="450.4" width="3.4" height="2.6"/></g>
<path d="M47.6 446.6 H56.6 M47.6 449.8 H56.6" stroke="#c05050" stroke-width="0.7"/>
<g fill="#141414"><rect x="78.2" y="445.6" width="4.4" height="8.2" rx="1.2"/><rect x="83.8" y="445.6" width="4.4" height="8.2" rx="1.2"/><rect x="79.4" y="442.8" width="2.8" height="4"/><rect x="84.2" y="442.8" width="2.8" height="4"/><rect x="81.8" y="446" width="3" height="3"/></g>
<rect x="79.2" y="451" width="2.2" height="2" fill="#f0f0f0"/><rect x="85" y="451" width="2.2" height="2" fill="#f0f0f0"/>
</svg>
<div id="rp" class="abs"></div>
<div id="rph" class="abs"><span>John and Janet Doe</span></div>
<div class="abs" style="left:210px;top:92.00px;width:110.5px;height:23.00px;background:#e9eee9"></div>
<div class="abs" style="left:210px;top:115.00px;width:336.5px;height:1px;background:#8c96ae"></div>
<div class="abs lab" style="left:216.3px;top:97.80px">Full Name</div>
<div class="abs val" style="left:326px;top:97.80px">Mr. John Doe</div>
<div class="abs" style="left:210px;top:116.00px;width:110.5px;height:23.00px;background:#e9eee9"></div>
<div class="abs" style="left:210px;top:139.00px;width:336.5px;height:1px;background:#8c96ae"></div>
<div class="abs lab" style="left:216.3px;top:121.80px">Nickname</div>
<div class="abs val" style="left:326px;top:121.80px">JD</div>
<div class="abs" style="left:210px;top:140.00px;width:110.5px;height:36.50px;background:#e9eee9"></div>
<div class="abs" style="left:210px;top:176.50px;width:336.5px;height:1px;background:#8c96ae"></div>
<div class="abs lab" style="left:216.3px;top:152.55px">Spouse</div>
<div class="abs val" style="left:326px;top:145.85px"><span class="k">Name:</span> Janet</div>
<div class="abs val" style="left:326px;top:159.15px"><span class="k">Birthday:</span> 04/07/1973</div>
<div class="abs" style="left:210px;top:177.50px;width:110.5px;height:36.30px;background:#e9eee9"></div>
<div class="abs" style="left:210px;top:213.80px;width:336.5px;height:1px;background:#8c96ae"></div>
<div class="abs lab" style="left:216.3px;top:189.95px">Home Street Address</div>
<div class="abs val" style="left:326px;top:183.25px">123 Home WAY</div>
<div class="abs val" style="left:326px;top:196.55px"><span style="letter-spacing:-0.18px">My City, State 12345</span> <a style="position:absolute;left:103.5px">Map</a><a style="position:absolute;left:135px">Driving&nbsp;Directions</a></div>
<div class="abs" style="left:210px;top:214.80px;width:110.5px;height:36.40px;background:#e9eee9"></div>
<div class="abs" style="left:210px;top:251.20px;width:336.5px;height:1px;background:#8c96ae"></div>
<div class="abs lab" style="left:216.3px;top:227.30px">Children</div>
<div class="abs val" style="left:326px;top:220.60px">Jimmy 06/01/2002</div>
<div class="abs val" style="left:326px;top:233.90px">John Jr.</div>
<div class="abs" style="left:210px;top:252.20px;width:110.5px;height:23.30px;background:#e9eee9"></div>
<div class="abs" style="left:210px;top:275.50px;width:336.5px;height:1px;background:#8c96ae"></div>
<div class="abs lab" style="left:216.3px;top:258.15px">Birthday</div>
<div class="abs val" style="left:326px;top:258.15px">03/01/1969</div>
<div class="abs" style="left:210px;top:276.50px;width:110.5px;height:23.40px;background:#e9eee9"></div>
<div class="abs" style="left:210px;top:299.90px;width:336.5px;height:1px;background:#8c96ae"></div>
<div class="abs lab" style="left:216.3px;top:282.50px">Anniversary</div>
<div class="abs val" style="left:326px;top:282.50px">06/25/1996</div>
<div class="abs" style="left:210px;top:300.90px;width:110.5px;height:23.20px;background:#e9eee9"></div>
<div class="abs" style="left:210px;top:324.10px;width:336.5px;height:1px;background:#8c96ae"></div>
<div class="abs lab" style="left:216.3px;top:306.80px">Favorite Sport</div>
<div class="abs val" style="left:326px;top:306.80px">football</div>
<div class="abs" style="left:210px;top:325.10px;width:110.5px;height:34.60px;background:#e9eee9"></div>
<div class="abs" style="left:210px;top:359.70px;width:336.5px;height:1px;background:#8c96ae"></div>
<div class="abs lab" style="left:216.3px;top:336.70px">Properties</div>
<div class="abs val" style="left:326px;top:330.00px"><span class="k">Date Added:</span> 09/07/2005</div>
<div class="abs val" style="left:326px;top:343.30px"><span class="k">Date Last Modified:</span> 09/08/2005</div>
<div class="abs" style="left:320px;top:92px;width:1px;height:268.20px;background:#8c96ae"></div>
<div id="status" class="abs"><span class="abs" style="left:9px;top:0.6px;white-space:nowrap">Current user - <span style="color:#3a3a98">NewUser</span></span><span class="abs" style="left:596px;top:0.6px;white-space:nowrap">July 11, 2006</span></div>
</div></body></html>
